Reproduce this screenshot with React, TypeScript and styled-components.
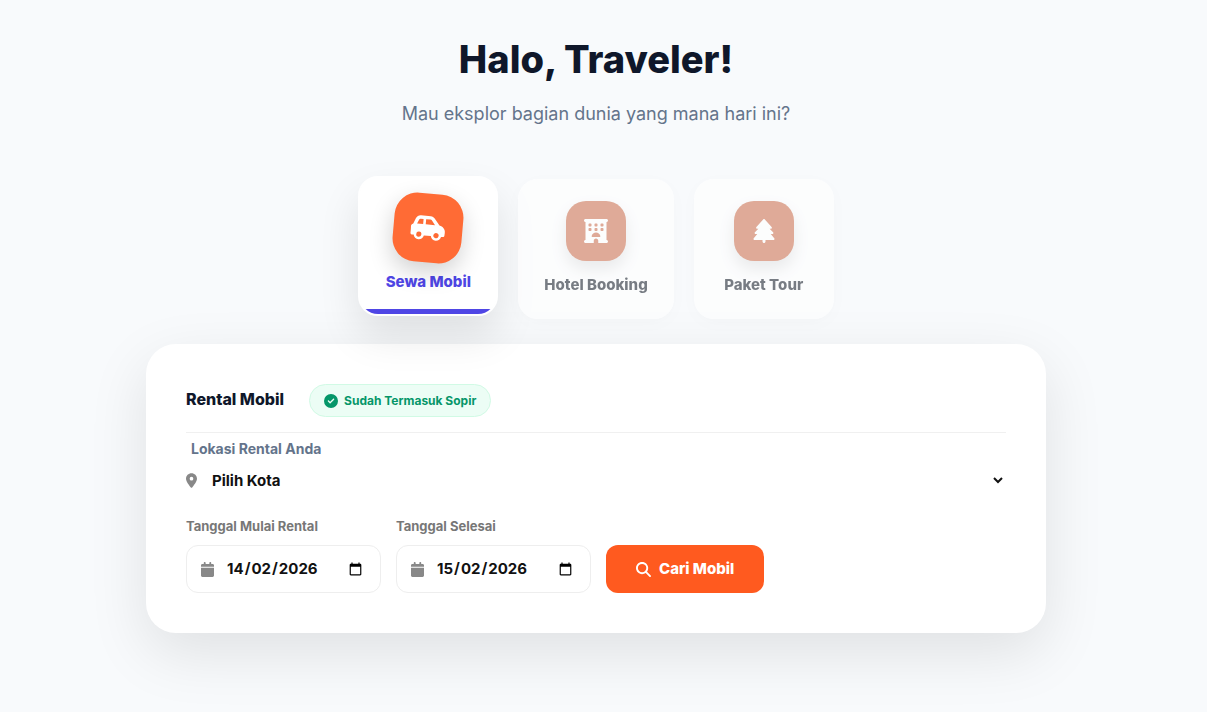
import React from "react";
import styled, { createGlobalStyle, css } from "styled-components";
import {
  FaCalendar,
  FaCarSide,
  FaCircleCheck,
  FaHotel,
  FaLocationDot,
  FaMagnifyingGlass,
  FaTree,
} from "react-icons/fa6";

const GlobalStyle = createGlobalStyle`
  *, *::before, *::after { box-sizing: border-box; }
  body {
    margin: 0;
    background: #f8fafc;
    color: #1e293b;
    font-family: "Inter", "Liberation Sans", sans-serif;
    font-size: 16px;
    line-height: 24px;
  }
  button, input, select { font-family: inherit; }
  svg { display: block; flex-shrink: 0; }
`;

const Page = styled.main`
  min-height: 100vh;
  padding: 31px 35px 80px 20px;
`;

const Hero = styled.header`
  text-align: center;
  margin-bottom: 53px;
`;

const Title = styled.h1`
  margin: 0 0 15px;
  font-size: 38px;
  line-height: 56px;
  font-weight: 800;
  color: #0f172a;
`;

const Subtitle = styled.p`
  margin: 0;
  font-size: 18px;
  line-height: 24px;
  color: #64748b;
`;

const Services = styled.nav`
  position: relative;
  z-index: 1;
  display: flex;
  justify-content: center;
  gap: 20px;
  margin-bottom: 25px;
`;

const ServiceIcon = styled.span<{ $wide?: boolean }>`
  display: flex;
  align-items: center;
  justify-content: center;
  width: 60px;
  height: 60px;
  border-radius: 20px;
  background: #ff6b35;
  color: #fff;
  font-size: 24px;
  box-shadow: 0 8px 16px rgba(0, 0, 0, 0.12);
  svg { width: ${({ $wide }) => ($wide ? "30px" : "24px")}; }
`;

const ServiceCard = styled.button<{ $active?: boolean }>`
  position: relative;
  display: flex;
  flex-direction: column;
  align-items: center;
  gap: 12px;
  min-width: 140px;
  padding: 20px 24px;
  overflow: hidden;
  border: 2px solid #fff;
  border-radius: 20px;
  background: #fff;
  color: #1e293b;
  font-size: 15px;
  line-height: 24px;
  font-weight: 800;
  cursor: pointer;
  ${({ $active }) =>
    $active
      ? css`
          color: #4f46e5;
          transform: translateY(-3px);
          box-shadow: 0 20px 40px rgba(0, 0, 0, 0.1);
          &::after {
            content: "";
            position: absolute;
            inset: auto 0 0;
            height: 5px;
            background: #4f46e5;
          }
          ${ServiceIcon} {
            transform: scale(1.15) rotate(5deg);
            box-shadow: 0 8px 20px rgba(0, 0, 0, 0.18);
          }
        `
      : css`
          opacity: 0.6;
          filter: grayscale(0.4);
          box-shadow: 0 4px 20px rgba(0, 0, 0, 0.04);
        `}
`;

const Panel = styled.section`
  max-width: 900px;
  margin: 0 auto;
  padding: 40px;
  border-radius: 30px;
  background: #fff;
  box-shadow: 0 20px 60px rgba(0, 0, 0, 0.1);
`;

const PanelHeader = styled.div`
  display: flex;
  align-items: center;
  gap: 25px;
  padding-bottom: 15px;
  border-bottom: 1px solid #f0f0f0;
`;

const PanelTitle = styled.h2`
  margin: 0;
  padding-bottom: 4px;
  font-size: 16px;
  line-height: 24px;
  font-weight: 800;
  color: #0f172a;
`;

const Badge = styled.span`
  display: flex;
  align-items: center;
  gap: 6px;
  padding: 6px 14px;
  border: 1px solid #d1fae5;
  border-radius: 20px;
  background: #ecfdf5;
  color: #059669;
  font-size: 12px;
  line-height: 19px;
  font-weight: 700;
  svg { font-size: 14px; }
`;

const LocationLabel = styled.label`
  display: block;
  padding: 5px 5px 0;
  font-size: 14px;
  line-height: 22px;
  font-weight: 700;
  color: #64748b;
`;

const LocationRow = styled.div`
  display: flex;
  align-items: center;
  gap: 11px;
  height: 40px;
  margin-bottom: 16px;
  color: #888;
  font-size: 15px;
  svg { width: 11px; }
`;

const CitySelect = styled.select`
  flex: 1;
  min-width: 0;
  border: 0;
  background: transparent;
  color: #111;
  font-size: 15px;
  line-height: 24px;
  font-weight: 700;
`;

const SearchRow = styled.form`
  display: flex;
  flex-wrap: wrap;
  align-items: flex-end;
  gap: 15px;
`;

const Field = styled.div`
  width: 195px;
`;

const FieldLabel = styled.label`
  display: block;
  margin-bottom: 8px;
  font-size: 13px;
  line-height: 21px;
  font-weight: 700;
  color: #777;
`;

const DateBox = styled.div`
  display: flex;
  align-items: center;
  height: 48px;
  padding: 0 15px 0 14px;
  border: 1px solid #eee;
  border-radius: 12px;
  color: #888;
  font-size: 15px;
  svg { width: 13px; }
`;

/* The grid keeps the day / month / year order in every browser locale. */
const DateInput = styled.input`
  flex: 1;
  min-width: 0;
  margin-left: 12px;
  padding: 0;
  border: 0;
  background: transparent;
  color: #111;
  font-size: 15px;
  line-height: 24px;
  font-weight: 700;
  &::-webkit-datetime-edit-fields-wrapper {
    display: inline-grid;
    grid-template-columns: repeat(5, auto);
    justify-content: start;
  }
  &::-webkit-datetime-edit-day-field { grid-area: 1 / 1; }
  &::-webkit-datetime-edit-month-field { grid-area: 1 / 3; }
  &::-webkit-datetime-edit-year-field { grid-area: 1 / 5; }
`;

const SubmitButton = styled.button`
  display: flex;
  align-items: center;
  gap: 8px;
  height: 48px;
  padding: 0 30px;
  border: 0;
  border-radius: 12px;
  background: #ff5a1f;
  color: #fff;
  font-size: 15px;
  line-height: 24px;
  font-weight: 800;
  cursor: pointer;
`;

const services = [
  { label: "Sewa Mobil", Icon: FaCarSide, active: true, wide: true },
  { label: "Hotel Booking", Icon: FaHotel },
  { label: "Paket Tour", Icon: FaTree },
];

const dates = [
  { id: "mulai", label: "Tanggal Mulai Rental", value: "2026-02-14" },
  { id: "selesai", label: "Tanggal Selesai", value: "2026-02-15" },
];

export default function App() {
  return (
    <>
      <GlobalStyle />
      <Page>
        <Hero>
          <Title>Halo, Traveler!</Title>
          <Subtitle>Mau eksplor bagian dunia yang mana hari ini?</Subtitle>
        </Hero>
        <Services>
          {services.map(({ label, Icon, active, wide }) => (
            <ServiceCard key={label} type="button" $active={active}>
              <ServiceIcon $wide={wide}>
                <Icon />
              </ServiceIcon>
              <span>{label}</span>
            </ServiceCard>
          ))}
        </Services>
        <Panel>
          <PanelHeader>
            <PanelTitle>Rental Mobil</PanelTitle>
            <Badge>
              <FaCircleCheck />
              Sudah Termasuk Sopir
            </Badge>
          </PanelHeader>
          <LocationLabel htmlFor="kota">Lokasi Rental Anda</LocationLabel>
          <LocationRow>
            <FaLocationDot />
            <CitySelect id="kota">
              <option>Pilih Kota</option>
            </CitySelect>
          </LocationRow>
          <SearchRow onSubmit={(event) => event.preventDefault()}>
            {dates.map(({ id, label, value }) => (
              <Field key={id}>
                <FieldLabel htmlFor={id}>{label}</FieldLabel>
                <DateBox>
                  <FaCalendar />
                  <DateInput id={id} type="date" defaultValue={value} />
                </DateBox>
              </Field>
            ))}
            <SubmitButton type="submit">
              <FaMagnifyingGlass />
              Cari Mobil
            </SubmitButton>
          </SearchRow>
        </Panel>
      </Page>
    </>
  );
}
